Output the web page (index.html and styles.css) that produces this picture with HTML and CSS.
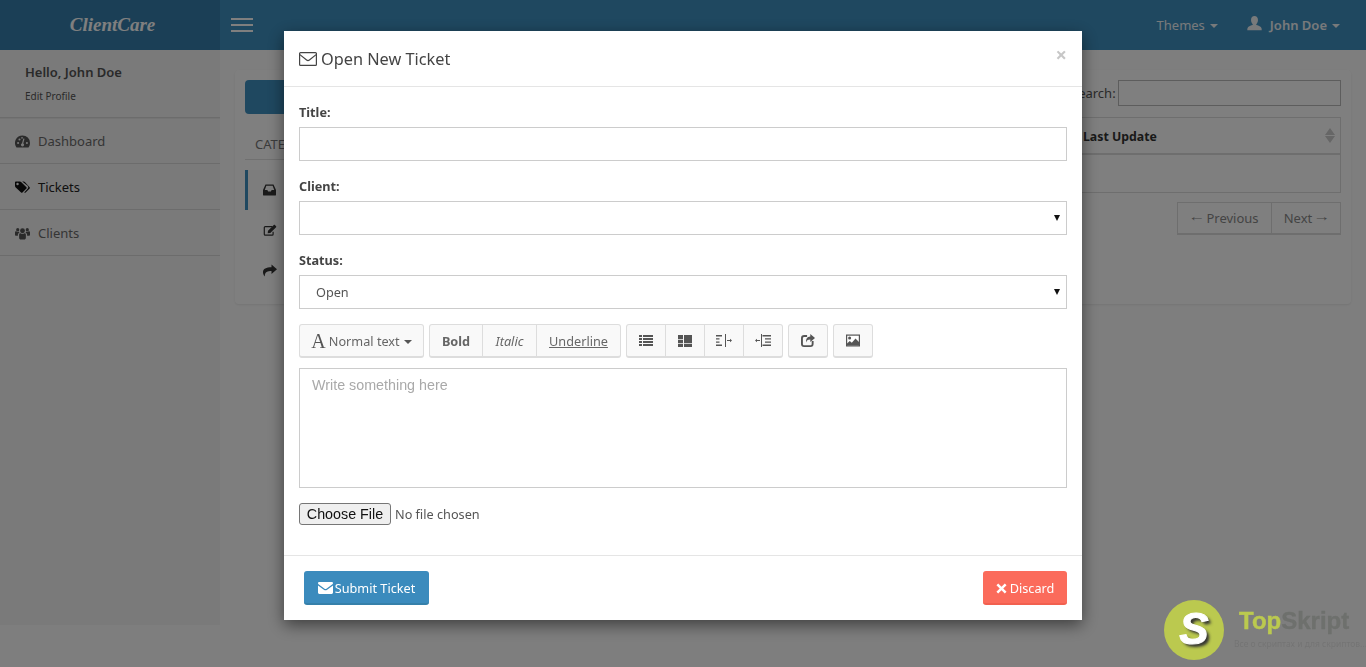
FILE: index.html
```html
<!DOCTYPE html>
<html lang="en">
<head>
<meta charset="utf-8">
<title>ClientCare - Tickets</title>
<link rel="stylesheet" href="styles.css">
</head>
<body>
<svg class="defs" width="0" height="0" aria-hidden="true">
  <defs>
    <symbol id="i-mail" viewBox="0 0 18 14"><path d="M1.500.6h15a.9.9 0 0 1 .9.900v11a.9.9 0 0 1-.9.900h-15a.9.9 0 0 1-.9-.900v-11a.9.9 0 0 1 .9-.900z" fill="none" stroke="currentColor" stroke-width="1.200"/><path d="M.9 2.600 7.600 8a2.200 2.200 0 0 0 2.800 0l6.700-5.400" fill="none" stroke="currentColor" stroke-width="1.200"/></symbol>
    <symbol id="i-mail-solid" viewBox="0 0 15 12"><path d="M1.300 0h12.400c.7 0 1.300.6 1.300 1.200 0 .5-.4 1.100-.9 1.400L8.400 6.700a1.600 1.600 0 0 1-1.800 0L.9 2.600C.4 2.300 0 1.700 0 1.200 0 .6.6 0 1.300 0z" fill="currentColor"/><path d="M0 3.600 6.200 7.900c.8.500 1.800.5 2.600 0L15 3.600v7c0 .8-.6 1.400-1.300 1.400H1.300C.6 12 0 11.400 0 10.600z" fill="currentColor"/></symbol>
  </defs>
</svg>

<div class="page">
  <header class="topbar">
    <div class="brand">ClientCare</div>
    <div class="topbar-main">
      <button class="burger" aria-label="Toggle menu"><span></span><span></span><span></span></button>
      <nav class="top-links">
        <a class="top-link">Themes <i class="caret"></i></a>
        <a class="top-link user">
          <svg class="user-ico" viewBox="0 0 16 16"><path d="M8 0c2.200 0 3.700 1.700 3.700 4.200 0 1.700-.7 3.300-1.600 4.200-.4.400-.3 1 .2 1.200 2 .8 4.700 1.500 5.200 3.400.2.800.2 1.800.2 2.300H.3c0-.5 0-1.500.2-2.300.5-1.900 3.200-2.600 5.200-3.400.5-.2.600-.8.200-1.200C5 7.500 4.300 5.900 4.300 4.200 4.300 1.700 5.800 0 8 0z" fill="currentColor"/></svg>
          <b>John Doe</b> <i class="caret"></i></a>
      </nav>
    </div>
  </header>

  <div class="layout">
    <aside class="sidebar">
      <div class="profile">
        <div class="hello">Hello, John Doe</div>
        <div class="edit">Edit Profile</div>
      </div>
      <ul class="side-nav">
        <li><svg viewBox="0 0 16 13"><path d="M8 0a8 8 0 0 1 8 8c0 1.800-.6 3.500-1.600 4.800l-.2.200H1.800l-.2-.2A8 8 0 0 1 8 0z" fill="currentColor"/><path d="M8 9 9.500 3.500" stroke="#f4f4f4" stroke-width="1.300" fill="none"/><circle cx="3.300" cy="8" r="1.100" fill="#f4f4f4"/><circle cx="12.700" cy="8" r="1.100" fill="#f4f4f4"/><circle cx="4.800" cy="4.300" r="1.100" fill="#f4f4f4"/><circle cx="7.500" cy="2.600" r=".9" fill="#f4f4f4"/><circle cx="8" cy="10" r="1.700" fill="#f4f4f4"/></svg><span>Dashboard</span></li>
        <li class="active"><svg viewBox="0 0 16 13"><path d="M0 .9C0 .4.400 0 .9 0h4.300c.5 0 1 .2 1.300.5l5.700 5.700c.4.400.4 1 0 1.400l-4.300 4.300c-.4.400-1 .4-1.400 0L.5 6.200A2 2 0 0 1 0 5zm2.700 3.200a1.300 1.300 0 1 0 0-2.600 1.300 1.300 0 0 0 0 2.600z" fill="currentColor" fill-rule="evenodd"/><path d="M7.700 0h1.500c.5 0 1 .2 1.300.5l5.100 5.700c.4.400.4 1 0 1.400l-4.300 4.300c-.4.400-1 .4-1.400 0l-.1-.1 3.700-3.900c.9-.9.900-2.300 0-3.200z" fill="currentColor"/></svg><span>Tickets</span></li>
        <li><svg viewBox="0 0 16 13"><circle cx="8" cy="3.600" r="2.600" fill="currentColor"/><circle cx="2.900" cy="2.400" r="1.700" fill="currentColor"/><circle cx="13.100" cy="2.400" r="1.700" fill="currentColor"/><path d="M4.400 7.700c0-.9.700-1.400 1.500-1.400.6.500 1.300.7 2.100.7s1.500-.2 2.100-.7c.8 0 1.500.5 1.500 1.400V11c0 1-.7 1.900-2 1.900H6.400c-1.300 0-2-.9-2-1.900z" fill="currentColor"/><path d="M0 5.400c0-.7.500-1.200 1.200-1.200.5.300 1 .5 1.700.5.500 0 .9-.1 1.300-.3.100.5.300 1 .6 1.300-1 .2-1.700 1-1.700 2V9H1.200C.5 9 0 8.500 0 7.800zM16 5.400c0-.7-.5-1.200-1.200-1.200-.5.300-1 .5-1.700.5-.5 0-.9-.1-1.300-.3-.1.500-.3 1-.6 1.300 1 .2 1.700 1 1.700 2V9h1.900c.7 0 1.200-.5 1.200-1.200z" fill="currentColor"/></svg><span>Clients</span></li>
      </ul>
    </aside>

    <main class="content">
      <section class="panel">
        <div class="panel-left">
          <div class="compose"></div>
          <div class="cat-title">CATE</div>
          <ul class="cats">
            <li class="on"><svg viewBox="0 0 14 12"><path d="M2.700 0h8.600L14 6v5c0 .6-.4 1-1 1H1c-.6 0-1-.4-1-1V6zm.9 1.500L1.900 6h2.800l.8 1.700h3l.8-1.700h2.800l-1.700-4.500z" fill="currentColor" fill-rule="evenodd"/></svg></li>
            <li><svg viewBox="0 0 14 12"><path d="M9.500 2.100H2.200c-.5 0-.9.400-.9.900v6.800c0 .5.400.9.900.9h7c.5 0 .9-.4.900-.9V7.300" fill="none" stroke="currentColor" stroke-width="1.200"/><path d="M4.700 8.700 5 6.300 10.800.5c.3-.3.800-.3 1.100 0l1.200 1.200c.3.300.3.800 0 1.100L7.300 8.500z" fill="currentColor"/></svg></li>
            <li><svg viewBox="0 0 14 12"><path d="M8.500 0 14 4.700 8.500 9.400V6.600C4.500 6.600 2 7.200 1.700 12 .5 10.500 0 9 0 7.700c0-3.700 3.200-4.900 8.500-5z" fill="currentColor"/></svg></li>
          </ul>
        </div>
        <div class="panel-right">
          <div class="search"><label>Search:</label><span class="search-box"></span></div>
          <div class="table-head"><b>Last Update</b><span class="sort"><i class="up"></i><i class="down"></i></span></div>
          <div class="table-row"></div>
          <div class="pager"><span class="pg pg-prev"><span class="pg-arrow">←</span>Previous</span><span class="pg pg-next">Next<span class="pg-arrow">→</span></span></div>
        </div>
      </section>
    </main>
  </div>
</div>

<div class="backdrop"></div>

<div class="watermark">
  <div class="wm-circle"><span>S</span></div>
  <div class="wm-text">
    <div class="wm-name"><span class="wm-top">Top</span><span class="wm-skript">Skript</span></div>
    <div class="wm-sub">Все о скриптах и для скриптов...</div>
  </div>
</div>

<div class="modal">
  <div class="modal-head">
    <h4><svg class="mail-ico"><use href="#i-mail"/></svg>Open New Ticket</h4>
    <span class="close">×</span>
  </div>
  <form class="modal-body">
    <label class="field-label">Title:</label>
    <div class="control"></div>
    <label class="field-label">Client:</label>
    <div class="control select"><span></span><i class="arrow"></i></div>
    <label class="field-label">Status:</label>
    <div class="control select"><span class="value">Open</span><i class="arrow"></i></div>

    <div class="toolbar">
      <div class="btn-group"><button type="button" class="tb tb-font"><span class="big-a">A</span> Normal text <i class="caret dark"></i></button></div>
      <div class="btn-group">
        <button type="button" class="tb tb-bold"><b>Bold</b></button>
        <button type="button" class="tb tb-italic"><i>Italic</i></button>
        <button type="button" class="tb tb-under"><u>Underline</u></button>
      </div>
      <div class="btn-group">
        <button type="button" class="tb tb-ico"><svg viewBox="0 0 14 12"><path d="M0 0h3v2H0zM4 0h10v2H4zM0 3h3v2H0zM4 3h10v2H4zM0 6h3v2H0zM4 6h10v2H4zM0 9h3v2H0zM4 9h10v2H4z" fill="currentColor"/></svg></button>
        <button type="button" class="tb tb-ico"><svg viewBox="0 0 14 12"><path d="M0 0h5v4H0zM0 4.700h5v3.600H0zM0 9h5v3H0zM6 0h8v8.300H6zM6 9h8v3H6z" fill="currentColor"/></svg></button>
        <button type="button" class="tb tb-ico tb-indent"><svg viewBox="0 0 16 13"><path d="M0 1h6v1.400H0zM0 4.300h3.500v1.300H0zM0 7.500h3.500v1.300H0zM0 10.600h6V12H0zM9 0h1v13H9zM11 6h3V4.700L16 6.500l-2 1.800V7h-3z" fill="currentColor"/></svg></button>
        <button type="button" class="tb tb-ico tb-indent"><svg viewBox="0 0 16 13"><path d="M7.500 1H16v1.400H7.500zM10 4.300h6v1.300h-6zM10 7.500h6v1.300h-6zM7.500 10.600H16V12H7.500zM6 0h1v13H6zM5 6H2V4.700L0 6.500l2 1.800V7h3z" fill="currentColor"/></svg></button>
      </div>
      <div class="btn-group"><button type="button" class="tb tb-ico tb-solo"><svg viewBox="0 0 14 13"><path d="M10.700 7v3c0 .7-.6 1.300-1.300 1.300H3.200c-.7 0-1.300-.6-1.300-1.300V4.200c0-.7.600-1.300 1.300-1.300h2.900V1H3.200A3.200 3.200 0 0 0 0 4.200V10a3 3 0 0 0 3 3h6.400a3.200 3.200 0 0 0 3.200-3.200V7z" fill="currentColor"/><path d="M9.300 0 14 4 9.300 8V5.600C7.200 5.600 5.700 6.200 5.300 8.500 4.500 5 6.200 2.600 9.300 2.400z" fill="currentColor"/></svg></button></div>
      <div class="btn-group"><button type="button" class="tb tb-ico tb-solo"><svg viewBox="0 0 14 12"><rect x=".6" y=".6" width="12.800" height="10.800" fill="#fff" stroke="currentColor" stroke-width="1.200"/><circle cx="3.600" cy="3.600" r="1.500" fill="currentColor"/><path d="M1 11V9l2.800-2.400 2 1.600 3.700-4.200 3.500 3.600V11z" fill="currentColor"/></svg></button></div>
    </div>

    <div class="editor">Write something here</div>

    <div class="file-row"><button type="button" class="file-btn">Choose File</button><span class="file-name">No file chosen</span></div>
  </form>
  <div class="modal-foot">
    <button type="button" class="action submit"><svg class="solid-mail"><use href="#i-mail-solid"/></svg><span>Submit Ticket</span></button>
    <button type="button" class="action discard"><svg class="x-ico" viewBox="0 0 10 10"><path d="M2 .4 5 3.400 8 .4 9.600 2 6.600 5l3 3L8 9.600l-3-3-3 3L.4 8l3-3-3-3z" fill="currentColor"/></svg><span>Discard</span></button>
  </div>
</div>
</body>
</html>
```

FILE: styles.css
```css
* { box-sizing: border-box; }
html, body { height: 100%; }
body {
  margin: 0;
  height: 667px;
  overflow: hidden;
  background: #fcfcfc;
  color: #555;
  font: 13px/1.4 "Noto Sans", "Open Sans", sans-serif;
}
ul { list-style: none; margin: 0; padding: 0; }
button { font-family: inherit; }
.defs { position: absolute; }

.page { height: 667px; display: flex; flex-direction: column; }

/* top bar */
.topbar { height: 50px; flex: none; display: flex; background: #3e90c0; }
.brand {
  width: 220px;
  background: #367eac;
  color: #fff;
  text-align: center;
  font: italic 700 19px/50px "Liberation Serif", serif;
  padding-left: 5px;
}
.topbar-main { flex: 1; display: flex; justify-content: space-between; align-items: center; padding: 0 26px 0 11px; }
.burger { width: 22px; padding: 0; background: none; border: 0; display: flex; flex-direction: column; gap: 4px; }
.burger span { display: block; height: 2px; background: #fff; }
.top-links { display: flex; gap: 29px; align-items: center; }
.top-link { color: #f0f4f7; font-size: 13px; display: flex; align-items: center; gap: 4px; }
.top-link b { font-weight: 600; }
.user-ico { width: 15px; height: 15px; margin-right: 4px; margin-top: -3px; }
.caret { display: inline-block; width: 0; height: 0; border-left: 4px solid transparent; border-right: 4px solid transparent; border-top: 4px solid currentColor; margin-left: 1px; margin-top: 2px; }
.caret.dark { color: #555; vertical-align: middle; margin-top: 2px; }

/* layout */
.layout { flex: none; height: 575px; display: flex; }
.sidebar { width: 220px; flex: none; background: #f4f4f4; }
.profile { height: 68px; padding: 13px 25px 0; border-bottom: 1px solid #d8d8d8; box-shadow: 0 1px 0 #e8e8e8; }
.hello { font-size: 13px; font-weight: 600; color: #555; line-height: 18px; }
.edit { font-size: 10px; color: #555; line-height: 14px; margin-top: 8px; }
.side-nav li { height: 46px; border-bottom: 1px solid #d8d8d8; display: flex; align-items: center; padding: 1px 0 0 15px; color: #6b6b6b; font-size: 13px; }
.side-nav li span { margin-top: 1px; }
.side-nav li svg { width: 15px; height: 13px; margin-right: 8px; color: #555; }
.side-nav li.active { color: #222; }
.side-nav li.active svg { color: #111; }

.content { flex: 1; padding: 20px 15px 0 15px; }
.panel { height: 234px; background: #fff; border-radius: 4px; box-shadow: 0 1px 2px rgba(0,0,0,.08); display: flex; justify-content: space-between; padding: 10px; }
.panel-left { width: 200px; }
.compose { height: 34px; background: #3e90c0; border-radius: 4px; }
.cat-title { height: 46px; padding: 21px 10px 0; font-size: 13px; line-height: 18px; color: #777; border-bottom: 1px solid #e0e0e0; margin-bottom: 10px; }
.cats li { height: 40px; display: flex; align-items: center; padding-left: 18px; color: #333; }
.cats li.on { border-left: 3px solid #3e90c0; padding-left: 15px; background: #fafafa; }
.cats li svg { width: 14px; height: 13px; }
.cats li.on svg { width: 13px; height: 12px; }
.panel-right { width: 270px; }
.search { height: 26px; display: flex; align-items: center; justify-content: flex-end; gap: 2px; color: #555; }
.search-box { width: 224px; height: 26px; border: 1px solid #bbb; background: #fff; }
.table-head { margin-top: 11px; height: 38px; border: 1px solid #ddd; border-bottom-width: 2px; border-left: 0; display: flex; justify-content: space-between; align-items: center; padding: 0 5px 0 12px; color: #333; font-size: 12.300px; }
.table-head b { font-weight: 700; margin-top: 2px; }
.sort { display: flex; flex-direction: column; gap: 1px; }
.sort i { display: block; width: 0; height: 0; border-left: 5px solid transparent; border-right: 5px solid transparent; }
.sort .up { border-bottom: 7px solid #ccc; }
.sort .down { border-top: 7px solid #ccc; }
.table-row { height: 38px; border: 1px solid #ddd; border-top: 0; border-left: 0; }
.pager { display: flex; justify-content: flex-end; margin-top: 9px; }
.pg { height: 33px; border: 1px solid #ddd; border-bottom-width: 2px; display: flex; align-items: center; justify-content: center; gap: 3px; color: #888; background: #fff; }
.pg-prev { width: 95px; }
.pg-next { width: 69px; border-left: 0; }
.pg-arrow { font-family: "Liberation Sans", sans-serif; font-size: 13px; line-height: 1; margin-top: -3px; transform: scaleX(1.300); }

/* overlay */
.backdrop { position: fixed; inset: 0; background: rgba(0,0,0,.5); }

.watermark { position: fixed; left: 1164px; top: 600px; display: flex; }
.wm-circle { width: 60px; height: 60px; border-radius: 50%; background: #bbc94f; display: flex; align-items: center; justify-content: center; }
.wm-circle span { color: #fff; font: italic 700 44px/1 "Liberation Sans", sans-serif; -webkit-text-stroke: 1px #fff; text-shadow: 3px 3px 3px #333; margin-top: -3px; }
.wm-text { margin-left: 10px; padding-top: 7px; }
.wm-name { font: 700 24px/28px "Liberation Sans", sans-serif; margin-left: 5px; -webkit-text-stroke: .4px; }
.wm-top { color: #bbc94f; }
.wm-skript { color: #6e706d; }
.wm-sub { font-size: 8.500px; color: #747474; line-height: 12px; white-space: nowrap; margin-top: 3px; }

/* modal */
.modal {
  position: fixed;
  left: 284px;
  top: 31px;
  width: 798px;
  height: 589px;
  background: #fff;
  box-shadow: 0 5px 15px rgba(0,0,0,.5);
  display: flex;
  flex-direction: column;
  font-size: 12.700px;
}
.modal-head { height: 56px; flex: none; border-bottom: 1px solid #e5e5e5; padding: 0 15px; display: flex; justify-content: space-between; position: relative; }
.modal-head h4 { margin: 0; font-size: 16.300px; font-weight: 400; line-height: 56px; color: #444; display: flex; align-items: center; }
.mail-ico { width: 18px; height: 14px; margin-right: 4px; color: #444; }
.close { position: absolute; right: 15px; top: 13px; font-size: 20px; line-height: 22px; color: #c7c7c7; font-weight: 700; }

.modal-body { flex: 1; padding: 16px 15px 0; }
.field-label { display: block; font-weight: 700; font-size: 12.700px; line-height: 18px; color: #444; margin-bottom: 6px; }
.control { height: 34px; border: 1px solid #ccc; background: #fff; margin-bottom: 16px; display: flex; align-items: center; justify-content: space-between; padding: 0 6px 0 16px; font-size: 12.700px; color: #555; }
.value { margin-top: 2px; }
.arrow { display: block; width: 0; height: 0; border-left: 3.500px solid transparent; border-right: 3.500px solid transparent; border-top: 6px solid #111; }

.toolbar { display: flex; gap: 5px; margin-top: -1px; }
.btn-group { display: flex; }
.tb { height: 34px; border: 1px solid #ddd; border-bottom-width: 2px; background: #f9f9f9; color: #666; font-size: 12.700px; padding: 0; margin-left: -1px; display: flex; align-items: center; justify-content: center; }
.btn-group .tb:first-child { margin-left: 0; border-radius: 3px 0 0 3px; }
.btn-group .tb:last-child { border-radius: 0 3px 3px 0; }
.btn-group .tb:only-child { border-radius: 3px; }
.tb b { font-weight: 700; }
.tb-font { width: 125px; }
.tb-bold { width: 54px; }
.tb-italic { width: 55px; }
.tb-under { width: 85px; }
.big-a { font: 20px/1 "Liberation Serif", serif; color: #555; margin-right: 3px; }
.tb-font .caret { margin-left: 4px; }
.tb-ico { width: 40px; color: #555; }
.tb-ico svg { width: 14px; height: 12px; }
.tb-ico.tb-indent svg { width: 16px; height: 13px; }
.tb-ico.tb-solo svg { width: 14px; height: 13px; }

.editor { height: 120px; margin-top: 10px; border: 1px solid #ccc; padding: 6px 12px; font: 14.300px/20px "Liberation Sans", sans-serif; color: #a9a9a9; }

.file-row { display: flex; align-items: center; margin-top: 15px; height: 22px; font-size: 12.700px; color: #555; }
.file-btn { width: 92px; height: 22px; padding: 0; background: #efefef; border: 1px solid #767676; border-radius: 3px; font: 14.300px "Liberation Sans", sans-serif; color: #111; margin-right: 4px; }
.file-name { margin-top: 2px; }

.modal-foot { height: 65px; flex: none; border-top: 1px solid #e5e5e5; display: flex; justify-content: space-between; align-items: center; padding: 0 15px 0 20px; }
.action { height: 34px; border: 0; border-bottom: 2px solid; border-radius: 3px; color: #fff; font-size: 12.700px; display: flex; align-items: center; justify-content: center; white-space: nowrap; padding: 2px 0 0; }
.submit { width: 125px; background: #3b8bbd; border-color: #3580aa; }
.discard { width: 84px; background: #fb6b5b; border-color: #f2604f; }
.solid-mail { width: 15px; height: 12px; margin-right: 2px; }
.x-ico { width: 11px; height: 11px; margin-right: 3px; }
```
